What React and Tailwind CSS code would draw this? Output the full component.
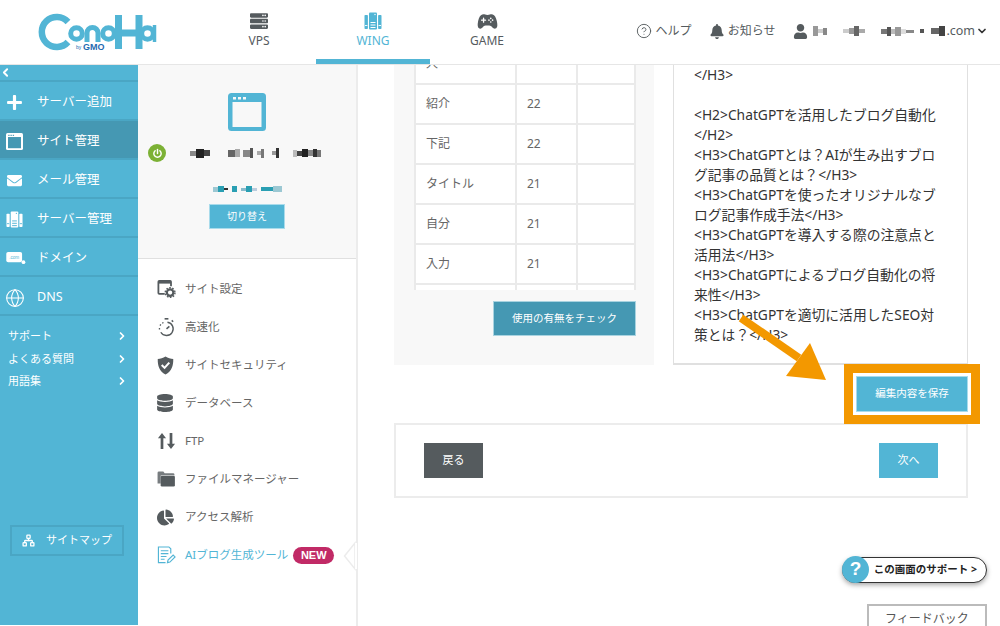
import React from "react";
import { FaServer, FaBell, FaUser, FaPlus, FaEnvelope, FaDatabase, FaChartPie } from "react-icons/fa";
import { IoGameController } from "react-icons/io5";
import { CircleHelp, ChevronDown, ChevronRight, ChevronLeft, Globe, Network } from "lucide-react";

const FONT = "font-['Noto_Sans','Noto_Sans_CJK_JP',sans-serif]";

function Logo() {
  return (
    <svg width="124" height="40" viewBox="0 0 124 40" className="block">
      <g fill="none" stroke="#52b5d5" strokeWidth="6.5">
        <path d="M33 10 A15 15 0 1 0 33 30" />
        <circle cx="41.5" cy="21.5" r="5.8" strokeWidth="5" />
        <path d="M52 30 V21 A5.5 5.5 0 0 1 63 21 V30" strokeWidth="5" />
        <circle cx="73.5" cy="21.5" r="5.8" strokeWidth="5" />
        <path d="M83.5 3 V37 M104 3 V37 M83.5 21 H104" strokeWidth="7" />
        <circle cx="112.5" cy="21.5" r="5.8" strokeWidth="5" />
        <path d="M119.5 13 V30" strokeWidth="3.5" />
      </g>
      <text x="41" y="37" fontSize="5" fill="#1f6ab0" fontFamily="Liberation Sans">by</text>
      <text x="48" y="37.5" fontSize="9" fontWeight="900" fill="#1f6ab0" fontFamily="Liberation Sans">GMO</text>
    </svg>
  );
}

function WindowIcon({ className = "" }) {
  return (
    <svg viewBox="0 0 38 38" className={className}>
      <rect width="38" height="38" rx="3.5" fill="currentColor" />
      <rect x="4.5" y="9" width="29" height="25" fill="var(--win,#fff)" />
      <rect x="5" y="4" width="3" height="2.5" fill="var(--win,#fff)" />
      <rect x="10" y="4" width="3" height="2.5" fill="var(--win,#fff)" />
      <rect x="15" y="4" width="3" height="2.5" fill="var(--win,#fff)" />
    </svg>
  );
}

function DevicesIcon({ className = "" }) {
  return (
    <svg viewBox="0 0 18 18" className={className} fill="currentColor">
      <rect x="5" y="0.5" width="8" height="17" rx="1" />
      <rect x="0.5" y="3" width="3.4" height="14" rx="0.8" />
      <rect x="14.1" y="3" width="3.4" height="14" rx="0.8" />
      <g fill="var(--cut,#fff)">
        <rect x="6.5" y="10" width="5" height="1" />
        <rect x="6.5" y="12.5" width="5" height="1" />
        <rect x="6.5" y="15" width="5" height="1" />
        <circle cx="11" cy="2.5" r="0.7" />
        <rect x="1" y="13" width="2.4" height="0.9" />
        <rect x="14.6" y="13" width="2.4" height="0.9" />
      </g>
    </svg>
  );
}

function ComIcon() {
  return (
    <svg viewBox="0 0 22 14" className="w-[21px] h-[13px]">
      <rect x="0" y="0" width="17" height="11" rx="2" fill="#fff" />
      <text x="8.5" y="7.5" fontSize="5" textAnchor="middle" fill="#52b5d5" fontFamily="Liberation Sans">.com</text>
      <circle cx="18.5" cy="11" r="2" fill="#fff" />
    </svg>
  );
}

function SiteSettingIcon() {
  return (
    <svg viewBox="0 0 20 20" className="w-[19px] h-[18px]">
      <path d="M8 15.5 H2 a1 1 0 0 1 -1 -1 V2 a1 1 0 0 1 1 -1 H14 a1 1 0 0 1 1 1 V7" fill="none" stroke="#555b5e" strokeWidth="2" />
      <rect x="1" y="1" width="14" height="3" fill="#555b5e" />
      <circle cx="14" cy="14" r="3.6" fill="none" stroke="#555b5e" strokeWidth="2.4" />
      <circle cx="14" cy="14" r="5.4" fill="none" stroke="#555b5e" strokeWidth="1.6" strokeDasharray="1.8 1.6" />
    </svg>
  );
}

function TimerIcon() {
  return (
    <svg viewBox="0 0 20 20" className="w-[19px] h-[19px]" fill="none" stroke="#555b5e">
      <path d="M11 4.5 A7 7 0 1 1 4 15" strokeWidth="1.4" />
      <path d="M2.6 12 V10.5 M3.2 8 L4 6.7 M5.5 5.5 L7 4.6" strokeWidth="1.4" strokeDasharray="1.5 1" />
      <path d="M8 0.8 H12" strokeWidth="1.8" />
      <path d="M15.5 2.5 L17 4" strokeWidth="1.6" />
      <path d="M10 11.5 L13 8.8" strokeWidth="1.6" />
    </svg>
  );
}

function ShieldIcon() {
  return (
    <svg viewBox="0 0 18 20" className="w-[17px] h-[19px]">
      <path d="M9 0.5 C11.5 2.2 14.5 3 17.2 3 C17.4 10 15.5 16 9 19.5 C2.5 16 0.6 10 0.8 3 C3.5 3 6.5 2.2 9 0.5 Z" fill="#555b5e" />
      <path d="M5 9.5 L8 12.5 L13 7" fill="none" stroke="#fff" strokeWidth="2.2" />
    </svg>
  );
}

function FolderIcon() {
  return (
    <svg viewBox="0 0 20 18" className="w-[18px] h-[16px]">
      <path d="M0.5 2 a1.5 1.5 0 0 1 1.5 -1.5 H7 L8.5 2.5 H18 a1.5 1.5 0 0 1 1.5 1.5 V5 H4 V14 H0.5 Z" fill="#777c7f" />
      <path d="M4 6.5 a1 1 0 0 1 1 -1 H19 a1 1 0 0 1 1 1 V16 a1.5 1.5 0 0 1 -1.5 1.5 H5.5 a1.5 1.5 0 0 1 -1.5 -1.5 Z" fill="#555b5e" />
    </svg>
  );
}

function ArrowsIcon() {
  return (
    <svg viewBox="0 0 20 20" className="w-[19px] h-[18px]" fill="#555b5e">
      <path d="M5 1 L9.5 7 H6.5 V19 H3.5 V7 H0.5 Z" />
      <path d="M15 19 L19.5 13 H16.5 V1 H13.5 V13 H10.5 Z" />
    </svg>
  );
}

function DocPenIcon() {
  return (
    <svg viewBox="0 0 20 20" className="w-[19px] h-[19px]" fill="none" stroke="#52b5d5" strokeWidth="1.2">
      <path d="M9 17.5 H1.5 V1 H12.5 L14.5 3 V8" />
      <path d="M4 5 H12 M4 8 H12 M4 11 H10 M4 14 H8" />
      <path d="M11 17.5 L11.6 14.8 L17 9.5 L19 11.5 L13.6 16.9 Z" />
    </svg>
  );
}

function Mosaic({ blocks, height = "h-[11px]" }) {
  return (
    <div className={`flex items-center blur-[0.5px] ${height}`}>
      {blocks.map(([w, c, h], i) => (
        <div key={i} style={{ width: w, height: h || 6, background: c }} />
      ))}
    </div>
  );
}

const T = "transparent";

function Tab({ icon, label, active }) {
  return (
    <div className={`w-[114px] h-[64px] flex flex-col items-center pt-[11px] border-b-[5px] ${active ? "border-[#52b5d5] text-[#52b5d5]" : "border-transparent text-[#555b5e]"}`}>
      <div className="h-[20px] flex items-center justify-center">{icon}</div>
      <div className="text-[12px] leading-[16px] mt-[2px]">{label}</div>
    </div>
  );
}

function Header() {
  return (
    <header className="h-[65px] shrink-0 flex border-b border-[#e6e6e6] bg-white relative z-10">
      <div className="w-[202px] shrink-0 pl-[35px] pt-[12px]">
        <Logo />
      </div>
      <Tab icon={<FaServer className="w-[18px] h-[18px]" />} label="VPS" />
      <Tab icon={<DevicesIcon className="w-[18px] h-[18px] block" />} label="WING" active />
      <Tab icon={<IoGameController className="w-[21px] h-[21px]" />} label="GAME" />
      <div className="flex-1 flex items-center justify-end pr-[12px] text-[12px] text-[#555b5e] pb-[2px]">
        <CircleHelp className="w-[16px] h-[16px] mr-[4px]" strokeWidth={1.4} />
        <span>ヘルプ</span>
        <FaBell className="w-[14px] h-[15px] ml-[18px] mr-[4px]" />
        <span>お知らせ</span>
        <FaUser className="w-[15px] h-[15px] ml-[18px] mr-[5px]" />
        <Mosaic blocks={[[5, "#999", 10], [5, "#ccc", 4], [4, "#888", 7]]} />
        <div className="w-[16px]" />
        <Mosaic blocks={[[6, "#ccc", 4], [5, "#999", 6], [5, "#666", 10], [6, "#aaa", 4]]} />
        <div className="w-[16px]" />
        <Mosaic blocks={[[6, "#777", 5], [4, "#555", 9], [4, "#bbb", 5], [6, "#999", 9], [5, "#ddd", 5], [8, "#888", 3], [6, T], [4, "#555", 4], [7, T], [8, "#666", 6], [6, "#444", 10]]} />
        <span className="ml-[1px] text-[12.5px]">.com</span>
        <ChevronDown className="w-[12px] h-[12px] ml-[1px] text-[#333]" strokeWidth={3.5} />
      </div>
    </header>
  );
}

function SideItem({ icon, label, active }) {
  return (
    <div className={`h-[39px] pt-[4px] flex items-center text-white text-[12.5px] border-b-2 border-[#4aa6c4] ${active ? "bg-[#4598b3]" : ""}`}>
      <div className="w-[37px] shrink-0 pl-[6px] flex items-center">{icon}</div>
      <span>{label}</span>
    </div>
  );
}

function SubLink({ label }) {
  return (
    <div className="h-[22.5px] flex items-center justify-between pl-[8px] pr-[10px] text-white text-[11px]">
      <span>{label}</span>
      <ChevronRight className="w-[12px] h-[12px]" strokeWidth={3.5} />
    </div>
  );
}

function Sidebar() {
  return (
    <aside className="w-[138px] shrink-0 bg-[#52b5d5] h-[560px] flex flex-col">
      <div className="h-[17px] border-b-2 border-[#4aa6c4] flex items-center text-white">
        <ChevronLeft className="w-[13px] h-[13px] -ml-px" strokeWidth={3.5} />
      </div>
      <SideItem icon={<FaPlus className="w-[17px] h-[17px]" />} label="サーバー追加" />
      <SideItem active icon={<WindowIcon className="w-[17px] h-[17px] text-white [--win:#4598b3]" />} label="サイト管理" />
      <SideItem icon={<FaEnvelope className="w-[17px] h-[15px]" />} label="メール管理" />
      <SideItem icon={<DevicesIcon className="w-[17px] h-[17px] text-white [--cut:#52b5d5]" />} label="サーバー管理" />
      <SideItem icon={<ComIcon />} label="ドメイン" />
      <SideItem icon={<Globe className="w-[20px] h-[20px] -ml-[1.5px] -mr-[1.5px]" strokeWidth={1.3} />} label="DNS" />
      <div className="mt-[9px]">
        <SubLink label="サポート" />
        <SubLink label="よくある質問" />
        <SubLink label="用語集" />
      </div>
      <div className="mt-[132px] ml-[10px] w-[114px] h-[31px] border-2 border-[#4aa6c4] flex items-center pl-[10px] text-white text-[11px]">
        <Network className="w-[13px] h-[13px] mr-[11px]" strokeWidth={2.4} />
        <span>サイトマップ</span>
      </div>
    </aside>
  );
}

function NavItem({ icon, label, active, badge }) {
  return (
    <div className={`h-[38px] flex items-center pl-[19px] text-[11.5px] ${active ? "text-[#52b5d5]" : "text-[#666]"}`}>
      <div className="w-[28px] shrink-0 flex items-center">{icon}</div>
      <span>{label}</span>
      {badge && (
        <span className="ml-[5px] w-[41px] h-[17px] rounded-full bg-[#c12a66] text-white text-[11px] font-bold flex items-center justify-center font-['Liberation_Sans',sans-serif]">
          NEW
        </span>
      )}
    </div>
  );
}

function SitePanel() {
  return (
    <div className="w-[218px] shrink-0 flex flex-col relative">
      <div className="h-[194px] shrink-0 bg-[#f8f8f8] border-b border-[#e0e0e0] flex flex-col items-center relative">
        <WindowIcon className="w-[38px] h-[38px] text-[#52b5d5] mt-[28px] [--win:#f8f8f8]" />
        <div className="flex items-center w-full pl-[10px] mt-[12px] h-[20px]">
          <div className="w-[18px] h-[18px] rounded-full bg-[#7cb135] flex items-center justify-center mr-[24px]">
            <svg viewBox="0 0 12 12" className="w-[11px] h-[11px]" fill="none" stroke="#fff" strokeWidth="1.6" strokeLinecap="round">
              <path d="M3.4 3 A4 4 0 1 0 8.6 3" />
              <path d="M6 1.5 V6" />
            </svg>
          </div>
          <Mosaic
            blocks={[[6, "#888", 5], [8, "#222", 9], [6, "#444", 6], [18, T], [7, "#666", 7], [5, "#aaa", 8], [3, T], [7, "#888", 7], [3, "#555", 10], [4, T], [4, "#aaa", 4], [3, "#777", 9], [8, T], [4, "#999", 4], [3, "#333", 10], [14, T], [4, "#bbb", 7], [5, "#444", 5], [6, "#222", 8], [5, "#888", 6], [4, "#333", 8], [4, "#777", 7]]}
          />
        </div>
        <div className="mt-[22px]">
          <Mosaic
            height="h-[8px]"
            blocks={[[5, "#9cc8d3", 5], [6, "#2a9fb3", 6], [4, "#333", 2], [4, T], [5, "#2a9fb3", 6], [4, T], [5, "#88bbcc", 3], [6, "#2a9fb3", 6], [5, "#bbccdd", 3], [4, T], [12, "#2a9fb3", 4], [9, "#9cc8d3", 6]]}
          />
        </div>
        <div className="mt-[11px] w-[76px] h-[25px] bg-[#52b5d5] border border-[#a9dbeb] text-white text-[10px] flex items-center justify-center">
          切り替え
        </div>
      </div>
      <div className="pt-[11px]">
        <NavItem icon={<SiteSettingIcon />} label="サイト設定" />
        <NavItem icon={<TimerIcon />} label="高速化" />
        <NavItem icon={<ShieldIcon />} label="サイトセキュリティ" />
        <NavItem icon={<FaDatabase className="w-[16px] h-[18px] text-[#555b5e]" />} label="データベース" />
        <NavItem icon={<ArrowsIcon />} label="FTP" />
        <NavItem icon={<FolderIcon />} label="ファイルマネージャー" />
        <NavItem icon={<FaChartPie className="w-[17px] h-[17px] text-[#555b5e]" />} label="アクセス解析" />
        <NavItem active icon={<DocPenIcon />} label="AIブログ生成ツール" badge />
      </div>
      <svg viewBox="0 0 14 40" className="absolute right-[-1px] top-[472px] w-[14px] h-[40px]">
        <path d="M12 6 L1.5 19 L12 32 Z" fill="#fff" stroke="#ececec" strokeWidth="1.5" />
        <rect x="12" y="6" width="2" height="26" fill="#fff" />
      </svg>
    </div>
  );
}

const ROWS = [["人", ""], ["紹介", "22"], ["下記", "22"], ["タイトル", "21"], ["自分", "21"], ["入力", "21"], ["", ""]];

function WordTable() {
  return (
    <div className="h-[225px] overflow-hidden ml-[20px] mr-[18px]">
      <div className="-mt-[20px] border-l-2 border-[#eaeaea] text-[12px] text-[#666]">
        {ROWS.map(([w, n], i) => (
          <div key={i} className="h-[40px] flex bg-white border-b-2 border-[#eaeaea]">
            <div className="w-[101px] pl-[10px] flex items-center border-r-2 border-[#eaeaea]">{w}</div>
            <div className="w-[61px] pl-[10px] flex items-center border-r-2 border-[#eaeaea]">{n}</div>
            <div className="flex-1 border-r-2 border-[#eaeaea]" />
          </div>
        ))}
      </div>
    </div>
  );
}

const LINES = [
  "</H3>",
  "\u00a0",
  "<H2>ChatGPTを活用したブログ自動化",
  "</H2>",
  "<H3>ChatGPTとは？AIが生み出すブロ",
  "グ記事の品質とは？</H3>",
  "<H3>ChatGPTを使ったオリジナルなブ",
  "ログ記事作成手法</H3>",
  "<H3>ChatGPTを導入する際の注意点と",
  "活用法</H3>",
  "<H3>ChatGPTによるブログ自動化の将",
  "来性</H3>",
  "<H3>ChatGPTを適切に活用したSEO対",
  "策とは？</H3>",
];

function Main() {
  return (
    <main className="flex-1 border-l-2 border-[#ececec] pl-[36px] flex flex-col">
      <div className="flex h-[300px] shrink-0">
        <div className="w-[260px] bg-[#f8f8f8] flex flex-col">
          <WordTable />
          <div className="mt-[11px] mr-[18px] self-end w-[143px] h-[35px] bg-[#4598b3] border border-[#a9d3e0] text-white text-[10.5px] flex items-center justify-center">
            使用の有無をチェック
          </div>
        </div>
        <div className="ml-[19px] w-[295px] border-l border-r border-b-2 border-[#e0e0e0] pl-[20px] text-[#333] text-[13.8px] leading-[20px] whitespace-nowrap">
          {LINES.map((l, i) => (
            <div key={i}>{l}</div>
          ))}
        </div>
      </div>
      <div className="w-[574px] flex justify-end pt-[11px] pb-[11px]">
        <div className="w-[112px] h-[36px] bg-[#52b5d5] border border-[#a9dbeb] text-white text-[10.5px] flex items-center justify-center shadow-[0_0_0_3px_#fff,0_0_0_12px_#f39800] relative z-[1]">
          編集内容を保存
        </div>
      </div>
      <div className="w-[574px] h-[75px] border-2 border-[#ececec] flex items-center justify-between px-[28px]">
        <div className="w-[59px] h-[35px] bg-[#555b5e] text-white text-[11px] flex items-center justify-center">戻る</div>
        <div className="w-[59px] h-[35px] bg-[#52b5d5] text-white text-[11px] flex items-center justify-center">次へ</div>
      </div>
    </main>
  );
}

export default function App() {
  return (
    <div className={`w-[1000px] h-[626px] overflow-hidden relative bg-white flex flex-col ${FONT}`}>
      <Header />
      <div className="flex flex-1 min-h-0">
        <Sidebar />
        <SitePanel />
        <Main />
      </div>

      <svg viewBox="0 0 100 80" className="absolute left-[735px] top-[310px] w-[100px] h-[80px] z-[2]">
        <path d="M6 8 L64 48" stroke="#f39800" strokeWidth="8" fill="none" />
        <path d="M91 70 L75 33 L51 66 Z" fill="#f39800" />
      </svg>

      <div className="absolute left-[842px] top-[557px] w-[145px] h-[26px] rounded-full border border-[#333] bg-white shadow-[0_2px_5px_rgba(0,0,0,0.35)] flex items-center justify-end pr-[9px] text-[10.5px] font-bold text-[#222] z-[3]">
        <span>この画面のサポート &gt;</span>
      </div>
      <div className="absolute left-[842px] top-[556px] w-[27px] h-[27px] rounded-full bg-[#52b5d5] text-white font-bold text-[19px] flex items-center justify-center z-[3] font-['Liberation_Sans',sans-serif]">
        ?
      </div>
      <div className="absolute left-[867px] top-[604px] w-[120px] h-[30px] bg-white border-2 border-[#bbb] text-[12px] text-[#555] flex items-start pt-[4px] justify-center z-[3]">
        フィードバック
      </div>
    </div>
  );
}
